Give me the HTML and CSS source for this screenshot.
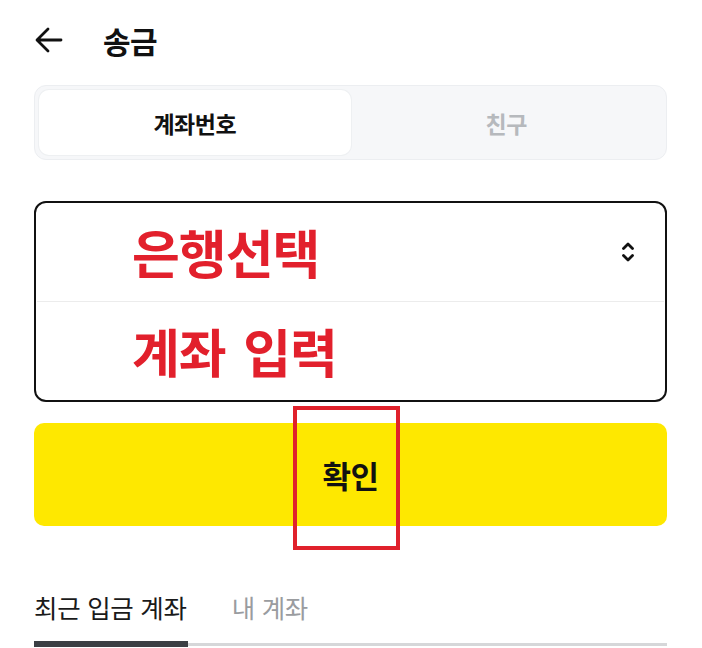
FILE: index.html
```html
<!DOCTYPE html>
<html lang="ko">
<head>
<meta charset="utf-8">
<title>송금</title>
<link rel="stylesheet" href="styles.css">
</head>
<body>
<div class="page">
  <header class="header">
    <svg class="back" width="28" height="26" viewBox="0 0 28 26" aria-hidden="true">
      <path d="M26 13H3M13 2L2 13l11 11" fill="none" stroke="#111" stroke-width="2.8" stroke-linecap="round" stroke-linejoin="round"/>
    </svg>
    <h1 class="title">송금</h1>
  </header>

  <div class="segment">
    <div class="seg-item seg-active">계좌번호</div>
    <div class="seg-item">친구</div>
  </div>

  <div class="form-box">
    <div class="row">
      <span class="red-text">은행선택</span>
      <svg class="updown" width="14" height="22" viewBox="0 0 14 22" aria-hidden="true">
        <path d="M2.5 7.5L7 3l4.5 4.5M2.5 14.5L7 19l4.5-4.5" fill="none" stroke="#111" stroke-width="2.8" stroke-linecap="round" stroke-linejoin="round"/>
      </svg>
    </div>
    <div class="divider"></div>
    <div class="row">
      <span class="red-text">계좌 입력</span>
    </div>
  </div>

  <div class="btn-wrap">
    <button class="confirm">확인</button>
    <div class="highlight"></div>
  </div>

  <nav class="tabs">
    <div class="tab tab-active">최근 입금 계좌</div>
    <div class="tab">내 계좌</div>
  </nav>
  <div class="tab-line"><div class="tab-bar"></div></div>
</div>
</body>
</html>
```

FILE: styles.css
```css
* { box-sizing: border-box; }
html, body { margin: 0; padding: 0; background: #fff; }
body {
  font-family: "Noto Sans CJK KR", "Noto Sans", sans-serif;
  color: #111;
  width: 702px;
  height: 648px;
  overflow: hidden;
}
.page {
  padding: 0 35px 0 34px;
}
.header {
  height: 80px;
  display: flex;
  align-items: center;
  padding-left: 1px;
}
.back { display: block; margin-right: 40px; }
.title {
  margin: 0;
  font-size: 30px;
  font-weight: 700;
  line-height: 1;
  letter-spacing: -0.5px;
}
.segment {
  margin-top: 5px;
  height: 75px;
  padding: 4px;
  display: flex;
  background: #f6f7f9;
  border: 1px solid #eceef1;
  border-radius: 12px;
}
.seg-item {
  flex: 1;
  display: flex;
  align-items: center;
  justify-content: center;
  font-size: 23px;
  font-weight: 600;
  color: #b6b9bd;
  border-radius: 10px;
  letter-spacing: -0.5px;
}
.seg-active {
  background: #fff;
  color: #111;
  box-shadow: 0 0 0 1px #eef0f2;
}
.form-box {
  margin-top: 41px;
  height: 201px;
  border: 2px solid #111;
  border-radius: 12px;
  display: flex;
  flex-direction: column;
}
.row {
  flex: 1;
  display: flex;
  align-items: center;
  padding-left: 96px;
  padding-right: 30px;
}
.divider {
  height: 1px;
  background: #ececec;
  margin: 0 1px;
}
.red-text {
  flex: 1;
  font-size: 52px;
  font-weight: 700;
  color: #e2202c;
  line-height: 1;
  letter-spacing: -1px;
  word-spacing: 4px;
}
.updown { display: block; }
.btn-wrap {
  position: relative;
  margin-top: 21px;
}
.confirm {
  display: block;
  width: 100%;
  height: 103px;
  border: 0;
  border-radius: 10px;
  background: #fee800;
  font-family: inherit;
  font-size: 31px;
  font-weight: 700;
  color: #111;
  letter-spacing: -0.5px;
}
.highlight {
  position: absolute;
  left: 259px;
  top: -17px;
  width: 107px;
  height: 144px;
  border: 4px solid #e0212b;
}
.tabs {
  margin-top: 64px;
  display: flex;
  gap: 45px;
  height: 51px;
}
.tab {
  font-size: 25.5px;
  color: #9a9c9f;
  line-height: 34px;
  letter-spacing: -0.3px;
}
.tab-active { color: #1a1a1a; }
.tab-line {
  height: 5px;
  background: #fff;
  border-bottom: 3px solid #d6d7d9;
  position: relative;
}
.tab-bar {
  width: 154px;
  height: 6px;
  background: #3b3f44;
}
```
